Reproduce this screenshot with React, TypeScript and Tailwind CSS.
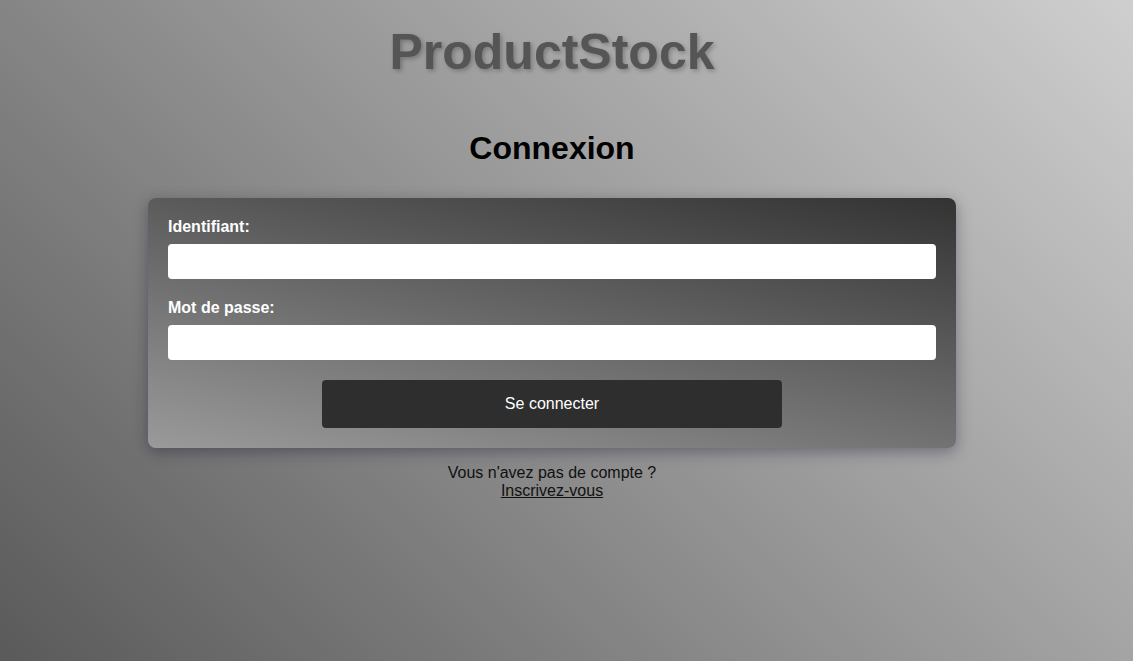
import React from "react";

export default function App() {
  return (
    <div
      className="min-h-screen w-full bg-[linear-gradient(45deg,#5a5a5a,#cfcfcf)] pr-[29px] text-black"
      style={{ fontFamily: '"Liberation Sans", Arial, sans-serif' }}
    >
      <div className="flex flex-col items-center pt-[23px]">
        <h1 className="text-[50px] leading-[58px] font-bold text-[#555555] [text-shadow:2px_2px_4px_rgba(0,0,0,0.25)]">
          ProductStock
        </h1>
        <h2 className="mt-[49px] text-[32px] leading-[37px] font-bold text-black">
          Connexion
        </h2>
        <form
          className="mt-[31px] flex w-[808px] flex-col rounded-[8px] bg-[linear-gradient(11deg,#9a9a9a,#333333)] p-[20px] shadow-[0_4px_15px_rgba(20,10,40,0.35)]"
          onSubmit={(e) => e.preventDefault()}
        >
          <label className="text-[16px] leading-[18px] font-bold text-white">
            Identifiant:
          </label>
          <input
            type="text"
            className="mt-[8px] h-[35px] w-full rounded-[4px] bg-white px-2 outline-none"
          />
          <label className="mt-[20px] text-[16px] leading-[18px] font-bold text-white">
            Mot de passe:
          </label>
          <input
            type="password"
            className="mt-[8px] h-[35px] w-full rounded-[4px] bg-white px-2 outline-none"
          />
          <button
            type="submit"
            className="mx-auto mt-[20px] h-[48px] w-[460px] rounded-[4px] bg-[#2e2e2e] text-[16px] text-white"
          >
            Se connecter
          </button>
        </form>
        <div className="mt-[16px] flex flex-col items-center text-[16px] leading-[18px] text-[#111]">
          <span>Vous n&apos;avez pas de compte ?</span>
          <a href="#" className="underline">
            Inscrivez-vous
          </a>
        </div>
      </div>
    </div>
  );
}
